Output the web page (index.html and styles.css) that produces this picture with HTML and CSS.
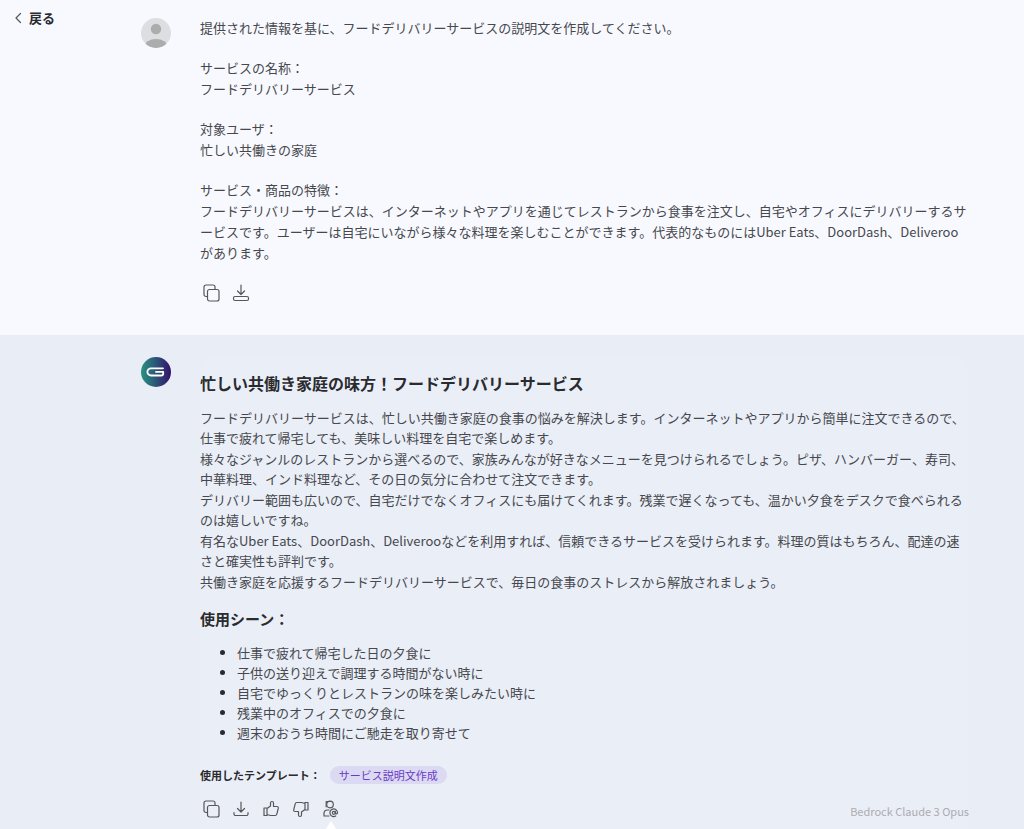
FILE: index.html
```html
<!DOCTYPE html>
<html lang="ja">

<head>
    <meta charset="UTF-8">
    <meta name="viewport" content="width=device-width, initial-scale=1.0">
    <title>サービス説明文作成</title>
    <link rel="stylesheet" href="styles.css">
</head>
<body>
    <svg class="sprite" aria-hidden="true">
        <symbol id="copy" viewBox="0 0 18 18">
            <rect x="5.5" y="5.5" width="11.5" height="11.5" rx="2"/>
            <path d="M5.5 12.5H4a2 2 0 0 1-2-2V3a2 2 0 0 1 2-2h7a2 2 0 0 1 2 2v2.5"/>
        </symbol>
        <symbol id="download" viewBox="0 0 18 18">
            <path d="M9 2v9.5M5.5 8.5L9 12l3.500-3.500M2 12.500v1.500a1.500 1.500 0 0 0 1.500 1.500h11a1.500 1.500 0 0 0 1.500-1.500v-1.500"/>
        </symbol>
        <symbol id="thumb" viewBox="0 0 18 18">
            <path d="M2 8h3v7.5H2zM5 8.500L8.500 6V3c0-2 3-2 3 0v3.500h3.500c1 0 1.500.8 1.300 1.700l-1.500 6c-.2.800-.8 1.300-1.600 1.300H8.500L5 14.500"/>
        </symbol>
    </svg>

    <section class="message">
        <button class="back" type="button">
            <svg viewBox="0 0 8 12" width="8" height="12"><path d="M6.5 1.5L2 6l4.500 4.500"/></svg>
            戻る
        </button>
        <svg class="avatar" viewBox="0 0 30 30" role="img" aria-label="ユーザー">
            <clipPath id="round"><circle cx="15" cy="15" r="15"/></clipPath>
            <g clip-path="url(#round)">
                <rect width="30" height="30" fill="#dddee1"/>
                <circle cx="15" cy="11" r="5.2" fill="#acacac"/>
                <ellipse cx="15" cy="29" rx="11.5" ry="8" fill="#acacac"/>
            </g>
        </svg>
        <div class="content prompt">
            <p>提供された情報を基に、フードデリバリーサービスの説明文を作成してください。</p>
            <p>サービスの名称：<br>フードデリバリーサービス</p>
            <p>対象ユーザ：<br>忙しい共働きの家庭</p>
            <p>サービス・商品の特徴：<br>フードデリバリーサービスは、インターネットやアプリを通じてレストランから食事を注文し、自宅やオフィスにデリバリーするサービスです。ユーザーは自宅にいながら様々な料理を楽しむことができます。代表的なものにはUber Eats、DoorDash、Deliverooがあります。</p>
            <div class="actions">
                <button type="button" aria-label="コピー"><svg><use href="#copy"/></svg></button>
                <button type="button" aria-label="ダウンロード">
                    <svg viewBox="0 0 18 18"><path d="M9 1v9M5.500 7L9 10.500 12.500 7"/><rect x="1.500" y="12.500" width="15" height="4" rx="1.500"/></svg>
                </button>
            </div>
        </div>
    </section>

    <section class="message reply">
        <svg class="avatar" viewBox="0 0 30 30" role="img" aria-label="アシスタント">
            <defs>
                <linearGradient id="logo" x1="0" y1="0" x2="1" y2="0">
                    <stop offset="0" stop-color="#299182"/>
                    <stop offset=".5" stop-color="#2b5577"/>
                    <stop offset="1" stop-color="#35106c"/>
                </linearGradient>
            </defs>
            <circle cx="15" cy="15" r="15" fill="url(#logo)"/>
            <path d="M22 11.3H10a3.600 3.600 0 0 0 0 7.200h10.200a2 2 0 0 0 2-2V14.900H15" fill="none" stroke="#fff" stroke-width="1.8"/>
        </svg>
        <div class="content answer">
            <h2>忙しい共働き家庭の味方！フードデリバリーサービス</h2>
            <div class="body">
                <p>フードデリバリーサービスは、忙しい共働き家庭の食事の悩みを解決します。インターネットやアプリから簡単に注文できるので、仕事で疲れて帰宅しても、美味しい料理を自宅で楽しめます。</p>
                <p>様々なジャンルのレストランから選べるので、家族みんなが好きなメニューを見つけられるでしょう。ピザ、ハンバーガー、寿司、中華料理、インド料理など、その日の気分に合わせて注文できます。</p>
                <p>デリバリー範囲も広いので、自宅だけでなくオフィスにも届けてくれます。残業で遅くなっても、温かい夕食をデスクで食べられるのは嬉しいですね。</p>
                <p>有名なUber Eats、DoorDash、Deliverooなどを利用すれば、信頼できるサービスを受けられます。料理の質はもちろん、配達の速さと確実性も評判です。</p>
                <p>共働き家庭を応援するフードデリバリーサービスで、毎日の食事のストレスから解放されましょう。</p>
            </div>
            <h3>使用シーン：</h3>
            <ul>
                <li>仕事で疲れて帰宅した日の夕食に</li>
                <li>子供の送り迎えで調理する時間がない時に</li>
                <li>自宅でゆっくりとレストランの味を楽しみたい時に</li>
                <li>残業中のオフィスでの夕食に</li>
                <li>週末のおうち時間にご馳走を取り寄せて</li>
            </ul>
            <div class="template">
                <span>使用したテンプレート：</span>
                <a href="#">サービス説明文作成</a>
            </div>
            <div class="footer">
                <div class="actions">
                    <button type="button" aria-label="コピー"><svg><use href="#copy"/></svg></button>
                    <button type="button" aria-label="ダウンロード"><svg><use href="#download"/></svg></button>
                    <button type="button" aria-label="良い"><svg><use href="#thumb"/></svg></button>
                    <button type="button" aria-label="悪い"><svg class="down"><use href="#thumb"/></svg></button>
                    <button class="mention" type="button" aria-label="メンション">
                        <svg viewBox="0 0 18 18">
                            <circle cx="8" cy="4.500" r="3.300"/>
                            <path d="M4.200 6.800V1.500h4M7 10H5.500C3.500 10 2 11.500 2 13.500V16h5"/>
                            <circle cx="11.800" cy="12.800" r="1.500"/>
                            <path d="M13.300 11.300v1.700c0 1.300 2.200 1.300 2.200-.5a3.800 3.800 0 1 0-1.800 3.500"/>
                        </svg>
                    </button>
                </div>
                <span class="model">Bedrock Claude 3 Opus</span>
            </div>
        </div>
    </section>
</body>
</html>
```

FILE: styles.css
```css
* {
    box-sizing: border-box;
}

body {
    margin: 0;
    min-height: 100vh;
    display: flex;
    flex-direction: column;
    background-color: #f8f9fe;
    color: #46484d;
    font-family: "Noto Sans CJK JP", sans-serif;
    font-size: 13px;
    line-height: 20px;
}

p, h2, h3, ul {
    margin: 0;
    padding: 0;
}

button {
    border: none;
    background: none;
    padding: 0;
    font: inherit;
    cursor: pointer;
}

svg {
    fill: none;
    stroke: #55575b;
    stroke-width: 1.2;
    stroke-linecap: round;
    stroke-linejoin: round;
}

.sprite {
    display: none;
}

.message {
    display: grid;
    grid-template-columns: 141px 30px minmax(0, 1fr);
    padding: 18px 55px 33px 0;
}

.back {
    grid-column: 1;
    align-self: start;
    justify-self: start;
    display: flex;
    align-items: center;
    gap: 7px;
    margin: -10px 0 0 14px;
    color: #2a2b2e;
    font-weight: bold;
}

.avatar {
    grid-column: 2;
    width: 30px;
    height: 30px;
    stroke: none;
}

.content {
    grid-column: 3;
    margin-left: 29px;
    word-break: break-all;
}

.prompt {
    margin-top: -1px;
    line-height: 21px;
}

.prompt p {
    margin-bottom: 19px;
}

.actions {
    display: flex;
    gap: 12px;
    padding-left: 2px;
}

.prompt .actions {
    padding-top: 2px;
}

.actions button {
    width: 18px;
    height: 18px;
}

.actions svg {
    display: block;
    width: 18px;
    height: 18px;
}

.actions .down {
    transform: rotate(180deg);
}

.reply {
    flex: 1;
    background-color: #e9edf6;
    padding-top: 22px;
    padding-bottom: 0;
}

.answer {
    border-radius: 16px 16px 0 0;
    background-color: #eaeef7;
    padding-top: 14px;
}

h2, h3 {
    color: #2a2b2e;
    font-size: 16px;
    font-weight: bold;
    line-height: 24px;
}

h3 {
    font-size: 15px;
}

.body {
    display: grid;
    gap: 1px;
    margin: 13px 0 15px;
}

ul {
    margin-top: 12px;
    padding-left: 37px;
}

li::marker {
    color: #2a2b2e;
}

.template {
    display: flex;
    align-items: center;
    gap: 9px;
    margin-top: 23px;
    font-size: 11px;
    line-height: 18px;
}

.template span {
    color: #2a2b2e;
    font-weight: bold;
}

.template a {
    border-radius: 9px;
    background-color: #dcdaf2;
    color: #6a3bc8;
    padding: 0 9px;
    text-decoration: none;
}

.footer {
    display: flex;
    justify-content: space-between;
    align-items: flex-start;
    margin-top: 16px;
}

.mention {
    position: relative;
}

/* tooltip arrow */
.mention::after {
    content: "";
    position: absolute;
    left: 4px;
    top: 21px;
    border: 5px solid transparent;
    border-top: none;
    border-bottom: 8px solid #fff;
}

.model {
    color: #aaacb0;
    font-size: 11px;
    line-height: 22px;
}
```
